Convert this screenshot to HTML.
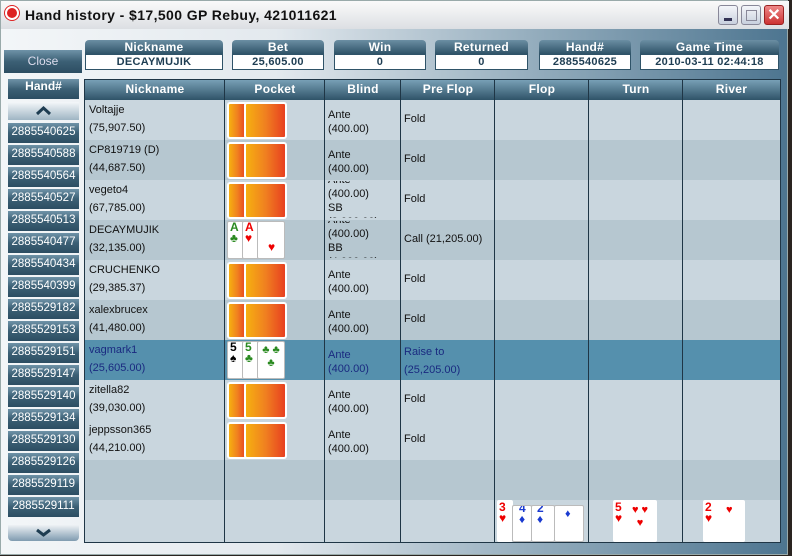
<html><head><style>
*{margin:0;padding:0;box-sizing:border-box}
body{width:792px;height:556px;overflow:hidden;background:#2a2420;font-family:"Liberation Sans",sans-serif;position:relative}
.win{position:absolute;left:0;top:0;width:788px;height:555px;background:linear-gradient(90deg,#f3f6f8 0%,#e3e9ee 35%,#8fa9ba 70%,#4d7590 100%);border:1px solid #9aa;}
.title{position:absolute;left:0;top:0;width:788px;height:28px;background:linear-gradient(#fafafa,#dcdfe3);font:bold 14px "Liberation Sans",sans-serif;color:#111;padding:6px 0 0 24px;letter-spacing:0.4px}
.logo{position:absolute;left:4px;top:5px;width:14px;height:14px;border-radius:50%;background:#d22;border:2px solid #fff;box-shadow:0 0 0 1px #d22}
.tb{position:absolute;top:4px;width:20px;height:20px;border-radius:3px;border:1px solid #889;background:linear-gradient(#f4f6fa,#c8d0de)}
.hb{position:absolute;height:14px;background:linear-gradient(#6b8ea3,#2f5368);color:#fff;font:bold 12px "Liberation Sans",sans-serif;text-align:center;line-height:14px;border-radius:4px 4px 0 0;letter-spacing:0.3px}
.vb{position:absolute;height:16px;background:#fff;border:1px solid #2f5368;color:#1e3d52;font:bold 11px "Liberation Sans",sans-serif;text-align:center;line-height:14px;letter-spacing:0.3px}
.btn{position:absolute;background:linear-gradient(#6f93a8,#3c6075 50%,#2c4d62);color:#fff;font-size:11px;text-align:center}
.tbl{position:absolute;left:83px;top:78px;width:697px;height:464px;border:1px solid #1f3646;background:#c9d6de}
.th{position:absolute;top:0;height:20px;background:linear-gradient(#78a0b6,#2f5368);color:#fff;font:bold 12px "Liberation Sans",sans-serif;text-align:center;line-height:19px;letter-spacing:0.3px}
.row{position:absolute;left:0;width:695px;height:40px}
.vl{position:absolute;top:0;width:1px;height:462px;background:#1f3646}
.c{position:absolute;font-size:11px;color:#111;line-height:18px}
.back{position:absolute;width:60px;height:37px}
.back i{position:absolute;top:0;height:37px;border:2px solid #fff;border-radius:3px;background:linear-gradient(90deg,#f6b010,#f08020 50%,#e84020)}
.card{position:absolute;background:#fff;border:1px solid #bbb;border-radius:2px;overflow:hidden}
.ix{font:bold 12px "Liberation Sans",sans-serif;padding-left:2px;line-height:11px}
.r{color:#e00}.g{color:#2a8a20}.b{color:#1a3ad0}.k{color:#000}
</style></head><body>
<div class="win">
<div class="title"><div class="logo"></div>Hand history - $17,500 GP Rebuy, 421011621</div>
<div class="tb" style="left:717px"><div style="position:absolute;left:5px;top:12px;width:8px;height:3px;background:#335"></div></div>
<div class="tb" style="left:740px"><div style="position:absolute;left:4px;top:4px;width:11px;height:11px;border:1px solid #889"></div></div>
<div class="tb" style="left:763px;background:linear-gradient(#e88,#c33);border-color:#922;color:#fff;font:bold 16px sans-serif;text-align:center;line-height:19px">✕</div>

<div class="btn" style="left:3px;top:49px;width:78px;height:23px;line-height:22px;color:#dde;font-size:12px">Close</div>
<div class="hb" style="left:84px;top:39px;width:138px">Nickname</div><div class="vb" style="left:84px;top:53px;width:138px">DECAYMUJIK</div>
<div class="hb" style="left:231px;top:39px;width:92px">Bet</div><div class="vb" style="left:231px;top:53px;width:92px">25,605.00</div>
<div class="hb" style="left:333px;top:39px;width:92px">Win</div><div class="vb" style="left:333px;top:53px;width:92px">0</div>
<div class="hb" style="left:434px;top:39px;width:93px">Returned</div><div class="vb" style="left:434px;top:53px;width:93px">0</div>
<div class="hb" style="left:538px;top:39px;width:92px">Hand#</div><div class="vb" style="left:538px;top:53px;width:92px">2885540625</div>
<div class="hb" style="left:639px;top:39px;width:139px">Game Time</div><div class="vb" style="left:639px;top:53px;width:139px">2010-03-11 02:44:18</div>

<div class="btn" style="left:7px;top:78px;width:71px;height:20px;line-height:19px;font:bold 12px 'Liberation Sans',sans-serif">Hand#</div>
<div style="position:absolute;left:7px;top:101px;width:71px;height:18px;background:linear-gradient(#f4f7f9,#9fb5c3)"><svg width="71" height="18"><path d="M29 12 L35.5 6 L42 12" stroke="#1e3d52" stroke-width="3" fill="none"/></svg></div>
<div id="list"></div>
<div style="position:absolute;left:7px;top:524px;width:71px;height:16px;border-radius:0 0 4px 4px;background:linear-gradient(#eef2f5,#7f9bb0)"><svg width="71" height="16"><path d="M29 5 L35.5 10 L42 5" stroke="#1e3d52" stroke-width="3" fill="none"/></svg></div>

<div class="tbl">
<div class="row" style="top:20px"></div>
<div class="row" style="top:60px;background:#b6c7d0"></div>
<div class="row" style="top:140px;background:#b6c7d0"></div>
<div class="row" style="top:220px;background:#b6c7d0"></div>
<div class="row" style="top:260px;background:#5590ad"></div>
<div class="row" style="top:380px;background:#b6c7d0"></div>
<div class="th" style="left:0;width:140px">Nickname</div>
<div class="th" style="left:140px;width:100px">Pocket</div>
<div class="th" style="left:240px;width:76px">Blind</div>
<div class="th" style="left:316px;width:94px">Pre Flop</div>
<div class="th" style="left:410px;width:94px">Flop</div>
<div class="th" style="left:504px;width:94px">Turn</div>
<div class="th" style="left:598px;width:97px">River</div>
<div class="vl" style="left:139px"></div><div class="vl" style="left:239px"></div><div class="vl" style="left:315px"></div><div class="vl" style="left:409px"></div><div class="vl" style="left:503px"></div><div class="vl" style="left:597px"></div>
<div id="rows"></div>
<div class="card" style="left:142px;top:141px;width:20px;height:38px"><div class="g ix">A<br>♣</div></div>
<div class="card" style="left:157px;top:141px;width:17px;height:38px"><div class="r ix">A<br>♥</div></div>
<div class="card" style="left:172px;top:141px;width:28px;height:38px"><div class="r" style="position:absolute;left:10px;top:18px;font-size:12px">♥</div></div>
<div class="card" style="left:142px;top:261px;width:20px;height:38px"><div class="k ix">5<br>♠</div></div>
<div class="card" style="left:157px;top:261px;width:17px;height:38px"><div class="g ix">5<br>♣</div></div>
<div class="card" style="left:172px;top:261px;width:28px;height:38px;color:#2a8a20;font-size:11px;line-height:13px;text-align:center;padding-top:2px">♣ ♣<br>♣</div>
<div class="card" style="left:412px;top:420px;width:16px;height:42px;border:none"><div class="r ix" style="margin-top:2px">3<br>♥</div></div>
<div class="card" style="left:427px;top:425px;width:20px;height:37px"><div class="b ix" style="padding-left:6px;margin-top:-3px">4<br>♦</div></div>
<div class="card" style="left:446px;top:425px;width:24px;height:37px"><div class="b ix" style="padding-left:5px;margin-top:-3px">2<br>♦</div></div>
<div class="card" style="left:469px;top:425px;width:30px;height:37px"><div class="b" style="position:absolute;left:10px;top:2px;font-size:11px">♦</div></div>
<div class="card" style="left:528px;top:420px;width:44px;height:42px;border:none"><div class="r ix" style="margin-top:2px">5<br>♥</div><div class="r" style="position:absolute;left:13px;top:4px;font-size:11px;line-height:13px;text-align:center;width:28px">♥ ♥<br>♥</div></div>
<div class="card" style="left:618px;top:420px;width:42px;height:42px;border:none"><div class="r ix" style="margin-top:2px">2<br>♥</div><div class="r" style="position:absolute;left:23px;top:4px;font-size:11px">♥</div></div>
</div>
</div>
<script>
var hs=["2885540625","2885540588","2885540564","2885540527","2885540513","2885540477","2885540434","2885540399","2885529182","2885529153","2885529151","2885529147","2885529140","2885529134","2885529130","2885529126","2885529119","2885529111"];
var h="";hs.forEach(function(x,i){h+='<div class="btn" style="left:7px;top:'+(122+i*22)+'px;width:71px;height:20px;line-height:19px;font-size:11.5px">'+x+'</div>'});
document.getElementById("list").innerHTML=h;
var P=[["Voltajje","(75,907.50)","Ante<br>(400.00)","Fold",1],["CP819719 (D)","(44,687.50)","Ante<br>(400.00)","Fold",1],["vegeto4","(67,785.00)","Ante<br>(400.00)<br>SB<br>(2,000.00)","Fold",1],["DECAYMUJIK","(32,135.00)","Ante<br>(400.00)<br>BB<br>(4,000.00)","Call (21,205.00)",0],["CRUCHENKO","(29,385.37)","Ante<br>(400.00)","Fold",1],["xalexbrucex","(41,480.00)","Ante<br>(400.00)","Fold",1],["vagmark1","(25,605.00)","Ante<br>(400.00)","Raise to<br>(25,205.00)",0],["zitella82","(39,030.00)","Ante<br>(400.00)","Fold",1],["jeppsson365","(44,210.00)","Ante<br>(400.00)","Fold",1]];
var r="";P.forEach(function(p,i){var t=20+i*40,col=i==6?"color:#1a2a80;":"";
r+='<div class="c" style="left:4px;top:'+(t+1)+'px;'+col+'">'+p[0]+'<br>'+p[1]+'</div>';
var tall=p[2].length>20;
r+='<div class="c" style="left:243px;top:'+(t+(tall?1:4))+'px;height:'+(tall?37:36)+'px;overflow:hidden;line-height:14px;'+col+'">'+(tall?'<div style="margin-top:-8px">'+p[2]+'</div>':'<div style="margin-top:4px">'+p[2]+'</div>')+'</div>';
r+='<div class="c" style="left:319px;top:'+(t+(p[3].indexOf("<br>")>0?3:10))+'px;'+col+'">'+p[3]+'</div>';
if(p[4])r+='<div class="back" style="left:142px;top:'+(t+2)+'px"><i style="left:0;width:21px"></i><i style="left:17px;width:43px"></i></div>';});
document.getElementById("rows").innerHTML=r;
</script>
</body></html>
